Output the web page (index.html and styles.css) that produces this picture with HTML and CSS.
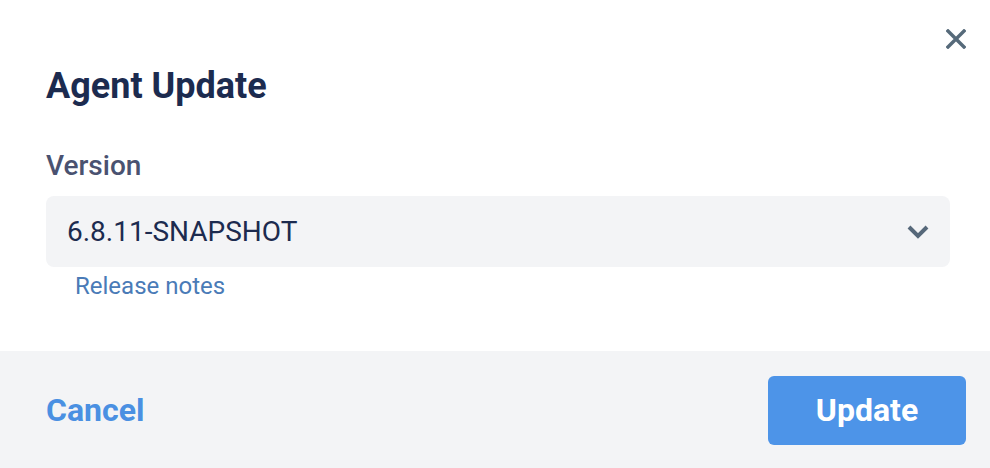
FILE: index.html
```html
<!DOCTYPE html>
<html lang="en">
<head>
<meta charset="utf-8">
<title>Agent Update</title>
<link rel="stylesheet" href="styles.css">
</head>
<body>
<div class="modal">
  <button class="close" aria-label="Close">
    <svg width="20" height="20" viewBox="0 0 20 20"><path d="M2 2 L18 18 M18 2 L2 18" stroke="#566a7a" stroke-width="3.4" stroke-linecap="square" fill="none"/></svg>
  </button>
  <div class="body">
    <h2 class="title">Agent Update</h2>
    <div class="label">Version</div>
    <div class="select">
      <span class="value">6.8.11-SNAPSHOT</span>
      <svg class="chev" width="24" height="16" viewBox="0 0 24 16"><path d="M3 3 L12 12 L21 3" stroke="#56687a" stroke-width="4" fill="none"/></svg>
    </div>
    <a class="notes" href="#">Release notes</a>
  </div>
  <div class="footer">
    <a class="cancel" href="#">Cancel</a>
    <button class="update">Update</button>
  </div>
</div>
</body>
</html>
```
FILE: styles.css
```css
* { box-sizing: border-box; }
html, body { margin: 0; padding: 0; background: #fff; }
body { font-family: Roboto, "Liberation Sans", sans-serif; }
.modal { position: relative; width: 990px; height: 468px; display: flex; flex-direction: column; }
.close { position: absolute; top: 29px; left: 946px; width: 20px; height: 20px; padding: 0; border: 0; background: none; display: flex; }
.body { height: 351px; padding: 64px 40px 0 46px; display: flex; flex-direction: column; align-items: flex-start; }
.title { margin: 0; font-size: 36px; line-height: 44px; font-weight: 700; color: #1c2b4f; }
.label { margin-top: 41px; font-size: 28px; line-height: 34px; font-weight: 500; color: #4a5270; }
.select { margin-top: 13px; align-self: stretch; height: 71px; background: #f3f4f6; border-radius: 8px; display: flex; align-items: center; justify-content: space-between; padding: 0 20px 0 21px; }
.value { font-size: 28px; line-height: 34px; color: #1c2b4f; }
.chev { display: block; margin-top: 1px; }
.notes { margin: 4px 0 0 29px; font-size: 24px; line-height: 30px; color: #4a7bb7; text-decoration: none; }
.footer { flex: 1; background: #f3f4f6; display: flex; align-items: center; justify-content: space-between; padding: 1px 24px 0 46px; }
.cancel { font-size: 32px; font-weight: 700; color: #4a90e2; text-decoration: none; line-height: 40px; }
.update { width: 198px; height: 69px; border: 0; border-radius: 6px; background: #4d94e8; color: #fff; font-family: Roboto, "Liberation Sans", sans-serif; font-size: 32px; font-weight: 700; }
```
